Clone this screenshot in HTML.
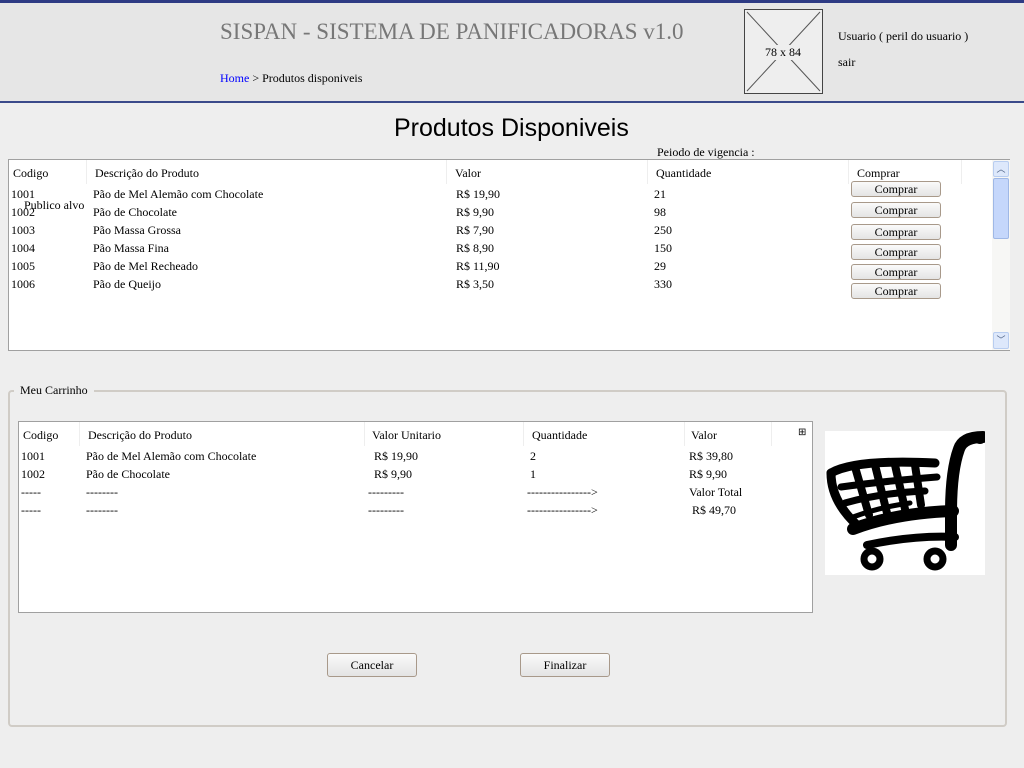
<!DOCTYPE html>
<html><head><meta charset="utf-8"><style>
*{margin:0;padding:0;box-sizing:border-box}
body{width:1024px;height:768px;background:#eeeeee;font-family:"Liberation Serif",serif;font-size:12px;color:#000;position:relative;overflow:hidden}
.a{position:absolute;white-space:nowrap}
.hdr{position:absolute;left:0;top:0;width:1024px;height:103px;background:#e6e6e6;border-top:3px solid #2e3b84;border-bottom:2px solid #3a4a8a}
.btn{position:absolute;width:90px;height:16px;border:1px solid #a8998a;border-radius:3px;background:linear-gradient(#fafafa,#e4e4e4);text-align:center;font-size:12px;line-height:14px}
.box{position:absolute;background:#fff;border:1px solid #a0a0a0}
</style></head><body>
<div class="hdr"></div>
<div class="a" style="left:220px;top:19px;font-size:23px;color:#777">SISPAN - SISTEMA DE PANIFICADORAS v1.0</div>
<div class="a" style="left:220px;top:71px;font-size:12px"><span style="color:#00f">Home</span> &gt; Produtos disponiveis</div>
<div class="a" style="left:744px;top:9px;width:79px;height:85px;border:1px solid #444;background:#eee">
<svg width="77" height="83" style="position:absolute;left:0;top:0"><line x1="2" y1="2" x2="75" y2="81" stroke="#555"/><line x1="75" y1="2" x2="2" y2="81" stroke="#555"/></svg>
<div class="a" style="left:20px;top:35px;background:#eee;font-size:12px">78 x 84</div></div>
<div class="a" style="left:838px;top:29px">Usuario ( peril do usuario )</div>
<div class="a" style="left:838px;top:55px">sair</div>

<div class="a" style="left:394px;top:114px;font-family:'Liberation Sans',sans-serif;font-size:25px">Produtos Disponiveis</div>
<div class="a" style="left:657px;top:145px">Peiodo de vigencia :</div>

<div class="box" style="left:8px;top:159px;width:1002px;height:192px;border-right:none"></div>
<div class="a" style="left:992px;top:160px;width:18px;height:190px;background:#f7f7f5">
<div style="position:absolute;left:1px;top:1px;width:16px;height:16px;background:#dde8fb;border:1px solid #b8cdf0;border-radius:2px;font-size:9px;text-align:center;color:#4d6185">︿</div>
<div style="position:absolute;left:1px;top:18px;width:16px;height:61px;background:#c5d7fb;border:1px solid #9fb8e6;border-radius:2px"></div>
<div style="position:absolute;left:1px;top:172px;width:16px;height:17px;background:#dde8fb;border:1px solid #b8cdf0;border-radius:2px;font-size:9px;text-align:center;color:#4d6185">﹀</div></div>
<div class="a" style="left:86px;top:160px;width:1px;height:24px;background:#eee"></div>
<div class="a" style="left:446px;top:160px;width:1px;height:24px;background:#eee"></div>
<div class="a" style="left:647px;top:160px;width:1px;height:24px;background:#eee"></div>
<div class="a" style="left:848px;top:160px;width:1px;height:24px;background:#eee"></div>
<div class="a" style="left:961px;top:160px;width:1px;height:24px;background:#eee"></div>
<div class="a" style="left:13px;top:166px">Codigo</div>
<div class="a" style="left:95px;top:166px">Descrição do Produto</div>
<div class="a" style="left:455px;top:166px">Valor</div>
<div class="a" style="left:656px;top:166px">Quantidade</div>
<div class="a" style="left:857px;top:166px">Comprar</div>

<div class="a" style="left:11px;top:185px;line-height:18px">1001<br>1002<br>1003<br>1004<br>1005<br>1006</div>
<div class="a" style="left:93px;top:185px;line-height:18px">Pão de Mel Alemão com Chocolate<br>Pão de Chocolate<br>Pão Massa Grossa<br>Pão Massa Fina<br>Pão de Mel Recheado<br>Pão de Queijo</div>
<div class="a" style="left:456px;top:185px;line-height:18px">R$ 19,90<br>R$ 9,90<br>R$ 7,90<br>R$ 8,90<br>R$ 11,90<br>R$ 3,50</div>
<div class="a" style="left:654px;top:185px;line-height:18px">21<br>98<br>250<br>150<br>29<br>330</div>
<div class="a" style="left:24px;top:198px">Publico alvo</div>
<div class="btn" style="left:851px;top:181px">Comprar</div>
<div class="btn" style="left:851px;top:202px">Comprar</div>
<div class="btn" style="left:851px;top:224px">Comprar</div>
<div class="btn" style="left:851px;top:244px">Comprar</div>
<div class="btn" style="left:851px;top:264px">Comprar</div>
<div class="btn" style="left:851px;top:283px">Comprar</div>

<div class="a" style="left:8px;top:390px;width:999px;height:337px;border:2px solid #d0ccc6;border-radius:4px"></div>
<div class="a" style="left:14px;top:383px;background:#eeeeee;padding:0 6px;line-height:14px">Meu Carrinho</div>

<div class="box" style="left:18px;top:421px;width:795px;height:192px"></div>
<div class="a" style="left:79px;top:422px;width:1px;height:24px;background:#eee"></div>
<div class="a" style="left:364px;top:422px;width:1px;height:24px;background:#eee"></div>
<div class="a" style="left:523px;top:422px;width:1px;height:24px;background:#eee"></div>
<div class="a" style="left:684px;top:422px;width:1px;height:24px;background:#eee"></div>
<div class="a" style="left:771px;top:422px;width:1px;height:24px;background:#eee"></div>
<div class="a" style="left:23px;top:428px">Codigo</div>
<div class="a" style="left:88px;top:428px">Descrição do Produto</div>
<div class="a" style="left:372px;top:428px">Valor Unitario</div>
<div class="a" style="left:532px;top:428px">Quantidade</div>
<div class="a" style="left:691px;top:428px">Valor</div>
<div class="a" style="left:798px;top:427px;font-size:10px">⊞</div>
<div class="a" style="left:21px;top:447px;line-height:18px">1001<br>1002<br>-----<br>-----</div>
<div class="a" style="left:86px;top:447px;line-height:18px">Pão de Mel Alemão com Chocolate<br>Pão de Chocolate<br>--------<br>--------</div>
<div class="a" style="left:374px;top:447px;line-height:18px">R$ 19,90<br>R$ 9,90</div>
<div class="a" style="left:368px;top:483px;line-height:18px">---------<br>---------</div>
<div class="a" style="left:530px;top:447px;line-height:18px">2<br>1</div>
<div class="a" style="left:527px;top:483px;line-height:18px">----------------&gt;<br>----------------&gt;</div>
<div class="a" style="left:689px;top:447px;line-height:18px">R$ 39,80<br>R$ 9,90<br>Valor Total<br>&nbsp;R$ 49,70</div>

<div class="a" style="left:825px;top:431px;width:160px;height:144px;background:#fff">
<svg width="160" height="144" viewBox="0 0 160 144">
<g fill="none" stroke="#000" stroke-linecap="round">
<path d="M6 42 Q30 28 110 32" stroke-width="9"/>
<path d="M6 42 Q6 70 32 94" stroke-width="9"/>
<path d="M16 56 Q60 50 112 46" stroke-width="7"/>
<path d="M20 72 Q55 62 100 60" stroke-width="7"/>
<path d="M28 86 Q55 76 85 72" stroke-width="5"/>
<path d="M30 36 L44 84 M50 34 L62 82 M70 34 L80 78 M90 34 L96 74" stroke-width="8"/>
<path d="M28 98 Q70 82 128 80" stroke-width="12"/>
<path d="M42 114 Q90 104 130 106" stroke-width="8"/>
<path d="M126 114 L126 82 Q126 40 134 18 Q138 6 158 6" stroke-width="12"/>
<circle cx="47" cy="128" r="8" stroke-width="7"/>
<circle cx="110" cy="128" r="8" stroke-width="7"/>
</g>
<circle cx="155" cy="7" r="6" fill="#000"/>
</svg></div>

<div class="btn" style="left:327px;top:653px;height:24px;line-height:22px">Cancelar</div>
<div class="btn" style="left:520px;top:653px;height:24px;line-height:22px">Finalizar</div>
</body></html>
